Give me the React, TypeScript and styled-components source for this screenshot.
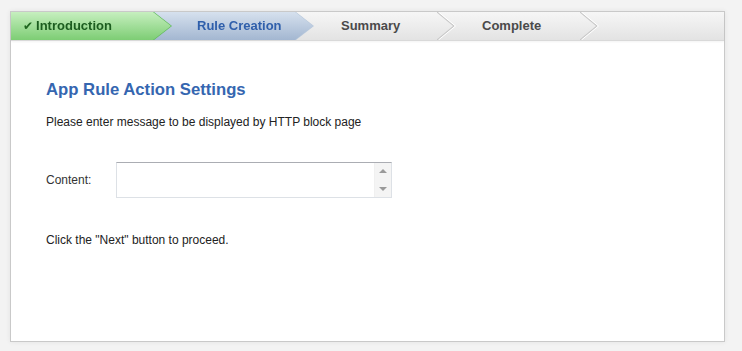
import React from "react";
import styled, { createGlobalStyle } from "styled-components";

const Global = createGlobalStyle`
  html, body { margin: 0; padding: 0; background: #f3f3f3; }
  body { font-family: "Liberation Sans", Arial, sans-serif; }
  * { box-sizing: border-box; }
`;

const Page = styled.div`
  padding: 11px 17px 9px 10px;
  width: 742px;
  height: 351px;
`;

const Panel = styled.div`
  width: 715px;
  height: 331px;
  background: #fff;
  border: 1px solid #c9c9c9;
  box-shadow: 0 0 5px rgba(0, 0, 0, 0.07);
  display: flex;
  flex-direction: column;
`;

const TabBar = styled.div`
  display: flex;
  height: 29px;
  background: linear-gradient(#f6f6f6, #e3e3e3);
  border-bottom: 1px solid #d9d9d9;
  box-shadow: 0 1px 2px rgba(0, 0, 0, 0.05);
`;

const TabEdge = styled.div<{ $edge: string; $z: number; $first?: boolean }>`
  position: relative;
  z-index: ${(p) => p.$z};
  margin-left: ${(p) => (p.$first ? "0" : "-18px")};
  filter: drop-shadow(1px 0 0 ${(p) => p.$edge});
  height: 28px;
`;

const Tab = styled.div<{ $bg: string; $color: string; $pad: number; $w: number }>`
  width: ${(p) => p.$w}px;
  height: 28px;
  padding-left: ${(p) => p.$pad}px;
  padding-bottom: 1px;
  display: flex;
  align-items: center;
  background: ${(p) => p.$bg};
  color: ${(p) => p.$color};
  font-size: 13px;
  font-weight: bold;
  clip-path: polygon(0 0, calc(100% - 18px) 0, 100% 50%, calc(100% - 18px) 100%, 0 100%);
`;

const GrayTab = styled.div<{ $pad: number; $w: number; $z: number }>`
  position: relative;
  z-index: ${(p) => p.$z};
  margin-left: -18px;
  width: ${(p) => p.$w}px;
  height: 28px;
  padding-left: ${(p) => p.$pad}px;
  padding-bottom: 1px;
  display: flex;
  align-items: center;
  color: #4a4a4a;
  font-size: 13px;
  font-weight: bold;
`;

const Sep = styled.svg`
  position: absolute;
  right: -2px;
  top: 0;
`;

const Check = styled.span`
  font-family: "DejaVu Sans", sans-serif;
  font-size: 12px;
  font-weight: bold;
  color: #1f661f;
  margin-right: 3px;
`;

const Content = styled.div`
  padding: 39px 0 0 35px;
  color: #222;
`;

const Heading = styled.h2`
  margin: 0;
  font-size: 16.7px;
  line-height: 20px;
  font-weight: bold;
  color: #3566b0;
`;

const Text = styled.p<{ $top: number }>`
  margin: ${(p) => p.$top}px 0 0;
  font-size: 12px;
  line-height: 16px;
  color: #222;
`;

const Row = styled.div`
  display: flex;
  align-items: center;
  margin-top: 32px;
`;

const Label = styled.label`
  width: 70px;
  font-size: 12px;
  color: #333;
`;

const Field = styled.div`
  width: 276px;
  height: 36px;
  display: flex;
  border: 1px solid #dde1e6;
  border-top-color: #abadb3;
  background: #fff;
`;

const Area = styled.textarea`
  flex: 1;
  border: none;
  resize: none;
  outline: none;
  font-family: "Liberation Sans", Arial, sans-serif;
  font-size: 12px;
  padding: 2px;
`;

const Scroll = styled.div`
  width: 17px;
  background: #f4f4f4;
  border-left: 1px solid #f0f0f0;
  display: flex;
  flex-direction: column;
  justify-content: space-between;
  align-items: center;
  padding: 6px 0 6px;
`;

const Arrow = styled.span<{ $down?: boolean }>`
  width: 0;
  height: 0;
  border-left: 4px solid transparent;
  border-right: 4px solid transparent;
  ${(p) =>
    p.$down
      ? "border-top: 4px solid #9a9a9a;"
      : "border-bottom: 4px solid #9a9a9a;"}
`;

const Separator = () => (
  <Sep width="20" height="28" viewBox="0 0 20 28">
    <polyline points="0,0 17,14 0,28" fill="none" stroke="#c9c9c9" strokeWidth="1.2" />
    <polyline points="1.5,0 18.5,14 1.5,28" fill="none" stroke="#ffffff" strokeWidth="1" />
  </Sep>
);

export default function App() {
  return (
    <>
      <Global />
      <Page>
        <Panel>
          <TabBar>
            <TabEdge $edge="#5fb85a" $z={4} $first>
              <Tab $w={160} $pad={12} $bg="linear-gradient(#c6efbf, #7dcd74)" $color="#1c5d1f">
                <Check>✔</Check>Introduction
              </Tab>
            </TabEdge>
            <TabEdge $edge="#b9c9dc" $z={3}>
              <Tab $w={160} $pad={44} $bg="linear-gradient(#d6e1ee, #a3b7d1)" $color="#2f5fab">
                Rule Creation
              </Tab>
            </TabEdge>
            <GrayTab $w={160} $pad={46} $z={2}>
              Summary
              <Separator />
            </GrayTab>
            <GrayTab $w={161} $pad={45} $z={1}>
              Complete
              <Separator />
            </GrayTab>
          </TabBar>
          <Content>
            <Heading>App Rule Action Settings</Heading>
            <Text $top={14}>Please enter message to be displayed by HTTP block page</Text>
            <Row>
              <Label>Content:</Label>
              <Field>
                <Area />
                <Scroll>
                  <Arrow />
                  <Arrow $down />
                </Scroll>
              </Field>
            </Row>
            <Text $top={34}>Click the "Next" button to proceed.</Text>
          </Content>
        </Panel>
      </Page>
    </>
  );
}
